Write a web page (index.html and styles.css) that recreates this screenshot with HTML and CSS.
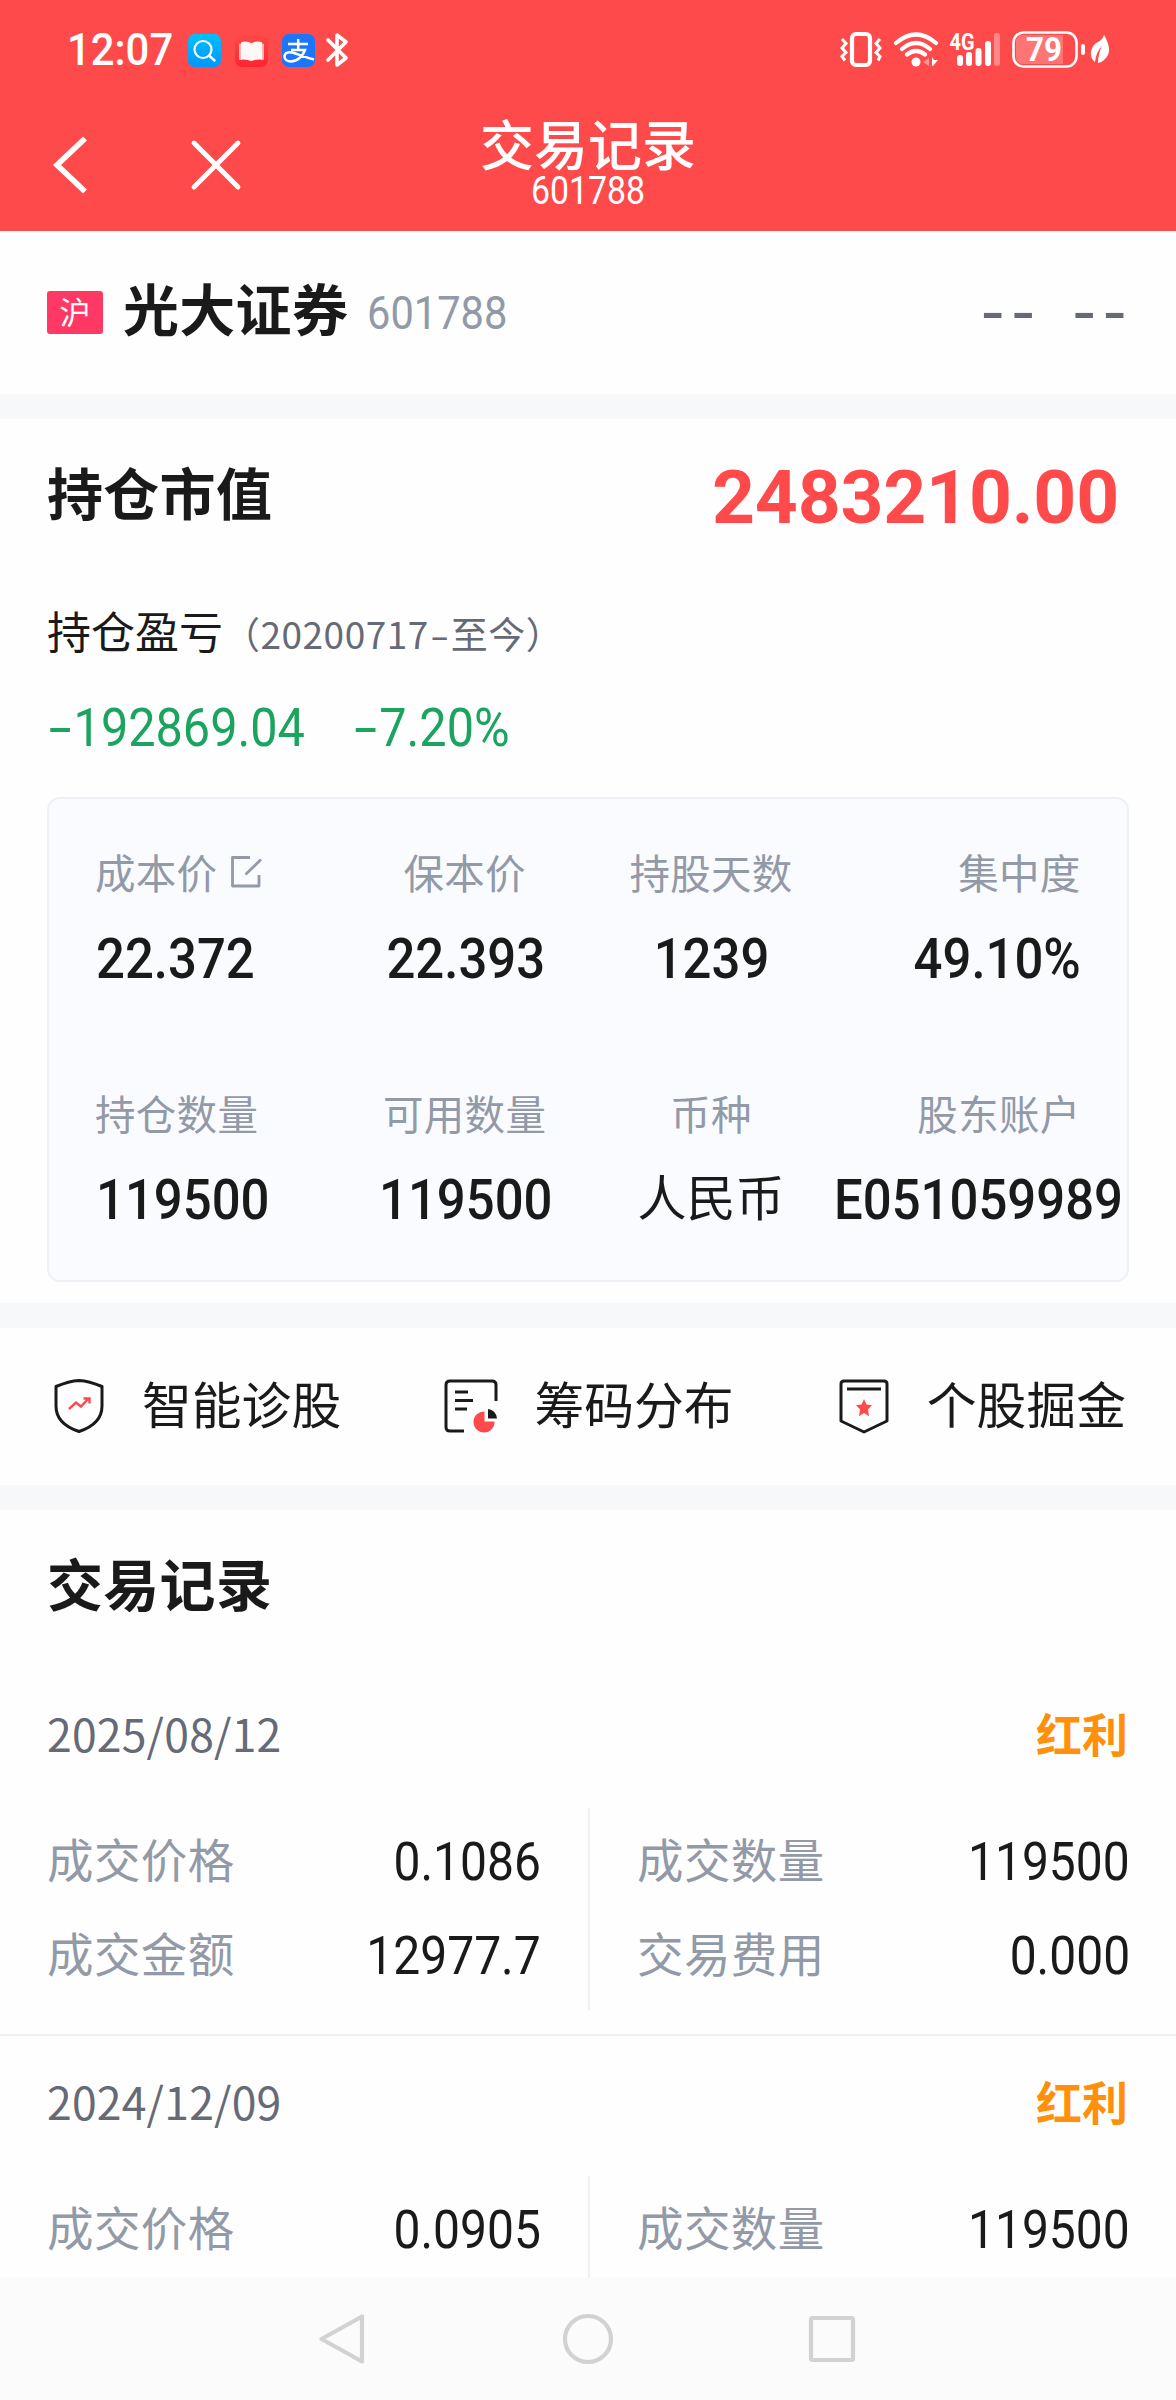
FILE: index.html
```html
<!DOCTYPE html>
<html lang="zh-CN">
<head>
<meta charset="utf-8">
<title>交易记录</title>
<link rel="stylesheet" href="styles.css">
</head>
<body>
<div class="screen">
  <header class="header">
    <div class="status">
      <div class="status-left">
        <span class="clock">12:07</span>
        <svg class="app" viewBox="0 0 33 33"><defs><linearGradient id="g1" x1="0" y1="0" x2="0" y2="1"><stop offset="0" stop-color="#00c0ff"/><stop offset="1" stop-color="#0096ff"/></linearGradient></defs><rect width="33" height="33" rx="7" fill="url(#g1)"/><circle cx="15" cy="15.500" r="8.500" fill="none" stroke="#fff" stroke-width="2.200"/><path d="M21 21.500l5.500 5" stroke="#fff" stroke-width="2.400" stroke-linecap="round"/></svg>
        <svg class="app" viewBox="0 0 33 33"><defs><linearGradient id="g2" x1="0" y1="0" x2="0" y2="1"><stop offset="0" stop-color="#ff4a48"/><stop offset="1" stop-color="#ff2430"/></linearGradient></defs><rect width="33" height="33" rx="7" fill="url(#g2)"/><path d="M5 9.500h2V26H5a1 1 0 0 1-1-1V10.500a1 1 0 0 1 1-1zM26 9.500h2a1 1 0 0 1 1 1V25a1 1 0 0 1-1 1h-2z" fill="#ffb5b3"/><path d="M6 8.200Q12 6.500 16.500 9.200Q21 6.500 27 8.200V25.500Q21 25 16.500 27Q12 25 6 25.500z" fill="#fff8f6"/></svg>
        <svg class="app" viewBox="0 0 33 33"><rect width="33" height="33" rx="7" fill="#1b76fb"/><path d="M6 10h20M16.200 5v11M9 16h14C21 22 15 27.500 9 27.500C5 27.500 2.500 25.500 2.500 22.500C2.500 19 6 17.500 10 18.500C17 20.500 22 23 32 25.500" fill="none" stroke="#fff" stroke-width="2.500"/></svg>
        <svg class="bt" viewBox="0 0 24 36"><path d="M3 8L21 26L12 33V3L21 10L3 28" fill="none" stroke="#fff" stroke-width="3.600" stroke-linejoin="round" stroke-linecap="round"/></svg>
      </div>
      <svg class="status-right" viewBox="838 28 274 44">
        <g fill="none" stroke="#fff">
          <rect x="852" y="34" width="18" height="31" rx="4" stroke-width="4.200"/>
          <path d="M842 39l4 4.500l-4 4.500l4 4.500l-4 4l3 4M880 39l-4 4.500l4 4.500l-4 4.500l4 4l-2 4" stroke-width="3"/>
          <path d="M896 43Q916 26 936 43M902 49Q916 37 930 49M907 54.500Q916 47.500 925 54.500" stroke-width="4.200" stroke-linecap="round"/>
          <rect x="1013.500" y="32.500" width="63" height="34" rx="10" stroke-width="2.600"/>
        </g>
        <g fill="#fff">
          <circle cx="916" cy="62" r="4.500"/>
          <path d="M932 57l2 3h4l-5 6h-1z"/>
          <path d="M929 58v8l-6-4z" opacity=".4"/>
          <rect x="957" y="55" width="6" height="11" rx="3"/><rect x="966" y="52" width="6" height="14" rx="3"/><rect x="975.500" y="48" width="6" height="18" rx="3"/><rect x="985" y="41" width="6" height="25" rx="3"/><rect x="994" y="33" width="6" height="33" rx="3" opacity=".35"/>
          <path d="M1023 35h40v29h-40q-7 0-7-7v-15q0-7 7-7z" opacity=".24"/>
          <rect x="1081" y="44" width="4" height="11" rx="2"/>
          <path d="M1104 35C1108 42 1113 53 1104 60Q1101 63 1098 63Q1098 54 1102 46Q1096 52 1095 62C1088 57 1091 47 1096 43Q1102 41 1104 35z"/>
          <text x="949.500" y="50" class="net" textLength="25" lengthAdjust="spacingAndGlyphs">4G</text>
          <text x="1026" y="61" class="batt" textLength="36" lengthAdjust="spacingAndGlyphs">79</text>
        </g>
      </svg>
    </div>
    <div class="titlebar">
      <svg class="nav-actions" viewBox="0 0 200 60"><path d="M39 4.500L11 31L39 57.500" fill="none" stroke="#fff" stroke-width="5.600"/><path d="M148 9L192 53M192 9L148 53" stroke="#fff" stroke-width="4.800" stroke-linecap="round"/></svg>
      <div class="title"><h1>交易记录</h1><span class="num">601788</span></div>
    </div>
  </header>

  <section class="stock">
    <span class="badge">沪</span>
    <strong class="heading">光大证券</strong>
    <span class="code num">601788</span>
    <span class="quote">-- --</span>
  </section>

  <section class="holding">
    <div class="market"><h2 class="heading">持仓市值</h2><span class="market-value num">2483210.00</span></div>
    <div class="profit-label">持仓盈亏<small>（20200717<i>-</i>至今）</small></div>
    <div class="profit num"><span><i>-</i>192869.04</span><span><i>-</i>7.20%</span></div>
    <div class="card">
      <div class="cell"><span class="label">成本价<svg class="edit" viewBox="0 0 34 34"><path d="M21 2.500H3.500V31H30V20M16.500 19.500L32 4.500" fill="none" stroke="#9299a7" stroke-width="2.800" stroke-linejoin="round"/></svg></span><b class="num">22.372</b></div>
      <div class="cell"><span class="label">保本价</span><b class="num">22.393</b></div>
      <div class="cell"><span class="label">持股天数</span><b class="num">1239</b></div>
      <div class="cell"><span class="label">集中度</span><b class="num">49.10%</b></div>
      <div class="cell"><span class="label">持仓数量</span><b class="num">119500</b></div>
      <div class="cell"><span class="label">可用数量</span><b class="num">119500</b></div>
      <div class="cell"><span class="label">币种</span><b class="cny">人民币</b></div>
      <div class="cell"><span class="label">股东账户</span><b class="num">E051059989</b></div>
    </div>
  </section>

  <section class="tools">
    <div class="tool"><svg viewBox="0 0 56 56"><path d="M28 2.500Q38 3 51 8.500V28Q51 46 28 53.500Q5 46 5 28V8.500Q18 3 28 2.500z" fill="none" stroke="#1a1a1a" stroke-width="3" stroke-linejoin="round"/><path d="M18 31l7-6.500l5 4l8-8.500M32.500 20.500h6v5" fill="none" stroke="#ff4a4c" stroke-width="2.400"/></svg><span>智能诊股</span></div>
    <div class="tool"><svg viewBox="0 0 56 56"><path d="M53 23V7q0-4-4-4H7q-4 0-4 4v42q0 4 4 4H21" fill="none" stroke="#1a1a1a" stroke-width="3"/><path d="M12 14h13M12 22.500h18M12 31h12" stroke="#1a1a1a" stroke-width="3"/><path d="M41.500 33.500V43.500H51.500A10.500 10.500 0 1 1 41.500 33.500z" fill="#ff4a4c"/><path d="M45 31q8 1 9 9.500h-9z" fill="#1a1a1a"/></svg><span>筹码分布</span></div>
    <div class="tool"><svg viewBox="0 0 56 56"><path d="M8 3H48q3 0 3 3V43L28 54L5 43V6q0-3 3-3z" fill="none" stroke="#1a1a1a" stroke-width="3" stroke-linejoin="round"/><path d="M11 11h34" stroke="#1a1a1a" stroke-width="3"/><path d="M28 21l2.500 5.500l5.500.800l-4 4l1 7l-5-3.200l-5 3.200l1-7l-4-4l5.500-.800z" fill="#ff4a4c"/></svg><span>个股掘金</span></div>
  </section>

  <section class="records">
    <h2 class="heading">交易记录</h2>
    <article class="record">
      <div class="record-head"><time>2025/08/12</time><strong>红利</strong></div>
      <div class="record-body">
        <dl><div><dt>成交价格</dt><dd class="num">0.1086</dd></div><div><dt>成交金额</dt><dd class="num">12977.7</dd></div></dl>
        <dl><div><dt>成交数量</dt><dd class="num">119500</dd></div><div><dt>交易费用</dt><dd class="num">0.000</dd></div></dl>
      </div>
    </article>
    <article class="record">
      <div class="record-head"><time>2024/12/09</time><strong>红利</strong></div>
      <div class="record-body">
        <dl><div><dt>成交价格</dt><dd class="num">0.0905</dd></div></dl>
        <dl><div><dt>成交数量</dt><dd class="num">119500</dd></div></dl>
      </div>
    </article>
  </section>

  <nav class="softkeys">
    <svg viewBox="0 0 56 56"><path d="M46 5.500V50.500L5.500 28z" /></svg>
    <svg viewBox="0 0 56 56"><circle cx="28" cy="28" r="23"/></svg>
    <svg viewBox="0 0 56 56"><rect x="7" y="7" width="42" height="42" rx="1.500"/></svg>
  </nav>
</div>
</body>
</html>
```
FILE: styles.css
```css
* { box-sizing: border-box; margin: 0; padding: 0; }
body { background: #fefefe; color: #1a1a1a; font-family: "Noto Sans CJK SC", sans-serif; }
.screen { width: 1176px; height: 2400px; overflow: hidden; display: flex; flex-direction: column; }
.screen > * { flex: none; }
svg { display: block; }
i { font-style: normal; display: inline-block; text-align: center; }
.num { font-family: Roboto, "Liberation Sans", sans-serif; white-space: nowrap; }
.heading { font-size: 56px; line-height: 60px; font-weight: 700; letter-spacing: .3px; }

.header { height: 231px; background: #ff4a4c; color: #fff; }
.status { height: 100px; display: flex; justify-content: space-between; align-items: center; padding: 0 64px 0 67px; }
.status-left { display: flex; align-items: center; }
.clock { font: 500 45px/50px Roboto, sans-serif; width: 121px; transform: scaleX(.93); transform-origin: left; }
.app { width: 33px; height: 33px; margin-right: 14px; }
.bt { width: 24px; height: 36px; margin-left: -4px; }
.status-right { width: 274px; height: 44px; }
.net { font: 700 23px Roboto, sans-serif; }
.batt { font: 700 33px Roboto, sans-serif; }
.titlebar { height: 131px; display: grid; grid-template-columns: 200px 1fr 200px; padding: 0 50px 0 46px; }
.nav-actions { width: 200px; height: 60px; margin-top: 34px; }
.title { display: flex; flex-direction: column; align-items: center; padding: 13px 0 0 4px; }
.title h1 { font-size: 54px; line-height: 60px; font-weight: 500; }
.title .num { margin-top: 1px; font-size: 38px; line-height: 34px; transform: scaleX(.89); }

.stock { height: 188px; padding: 46px 47px 0; border-bottom: 25px solid #f6f8fa; display: flex; align-items: flex-start; }
.badge { width: 56px; height: 43px; margin-top: 14px; border-radius: 3px; background: #ff3864; color: #fff; font-size: 31px; line-height: 40px; text-align: center; }
.stock .heading { margin-left: 20px; }
.code { margin-left: 19px; margin-top: 6px; font-size: 46px; line-height: 60px; transform: scaleX(.905); transform-origin: left; color: #9299a7; }
.quote { margin: 9px 3px 0 auto; font: 400 64px/60px "Liberation Mono", monospace; letter-spacing: -7.9px; color: #666a77; }

.holding { height: 909px; border-bottom: 25px solid #f6f8fa; padding: 42px 47px 0; }
.market { height: 114px; display: flex; justify-content: space-between; }
.market-value { margin: 1px 10px 0 0; font-size: 75px; line-height: 70px; font-weight: 700; letter-spacing: -.2px; color: #ff4a4c; }
.profit-label { height: 100px; font-size: 44px; line-height: 110px; white-space: nowrap; }
.profit-label small { font-size: 37px; letter-spacing: .5px; color: #666a77; }
.profit-label i { width: 22px; transform: scaleX(1.5); }
.profit { height: 122px; display: flex; gap: 52px; font-size: 53px; line-height: 106px; transform: scaleX(.917); transform-origin: left; color: #1ba45f; }
.profit i { width: 29px; transform: scaleX(1.7); }
.card { height: 485px; border: 2px solid #edf1f5; border-radius: 13px; background: #fafbff; display: grid; grid-template-columns: repeat(4, 246.4px); grid-template-rows: 241px 241px; padding: 0 46px; }
.cell { display: flex; flex-direction: column; align-items: center; padding-top: 43px; }
.cell:nth-child(4n+1) { align-items: flex-start; }
.cell:nth-child(4n) { align-items: flex-end; }
.label { display: flex; align-items: center; height: 60px; font-size: 40.5px; line-height: 60px; letter-spacing: .3px; color: #9299a7; white-space: nowrap; }
.edit { width: 34px; height: 34px; margin: 0 0 0 12px; }
.cell b { height: 60px; margin-top: 27px; line-height: 60px; font-size: 55px; font-weight: 500; transform: translateX(1px) scaleX(.925); }
.cell:nth-child(4n+1) b { transform-origin: left; }
.cell:nth-child(4n) b { transform: scaleX(.925); transform-origin: right; }
.cell:last-child b { align-self: flex-start; transform-origin: left; }
.cell b.cny { margin-top: 22px; font-size: 49px; font-weight: 400; transform: none; }

.tools { height: 182px; border-bottom: 25px solid #f6f8fa; padding: 50px 50px 0 51px; display: flex; justify-content: space-between; }
.tool { display: flex; height: 56px; align-items: center; font-size: 49.8px; white-space: nowrap; }
.tool span { line-height: 56px; height: 65px; }
.tool svg { width: 56px; height: 56px; margin-right: 35px; }

.records { height: 768px; overflow: hidden; padding-top: 42px; }
.records .heading { margin-left: 47px; height: 116px; }
.record { height: 368px; border-bottom: 2px solid #eef2f3; }
.record-head { height: 140px; padding: 0 48px 0 47px; display: flex; justify-content: space-between; line-height: 128px; }
time { font-size: 44.5px; line-height: 130px; letter-spacing: .2px; color: #666a77; }
.record-head strong { font-size: 46px; color: #ff900b; }
.record-body { height: 202px; display: grid; grid-template-columns: 588px 588px; }
dl { padding-top: 4px; }
dl div { height: 94px; display: flex; justify-content: space-between; padding: 0 46px 0 47px; }
dl:last-child { border-left: 2px solid #eef2f3; }
dt { font-size: 46.5px; line-height: 92px; letter-spacing: .4px; color: #9299a7; }
dd { font-size: 53px; line-height: 100px; transform: scaleX(.905); transform-origin: right; }
dl:first-child dd { margin-right: 1px; }

.softkeys { height: 122px; background: #fbfbfb; display: flex; justify-content: center; padding-top: 33px; gap: 188px; }
.softkeys svg { width: 56px; height: 56px; fill: none; stroke: #d2d2d2; stroke-width: 4.2; stroke-linejoin: round; }
```
